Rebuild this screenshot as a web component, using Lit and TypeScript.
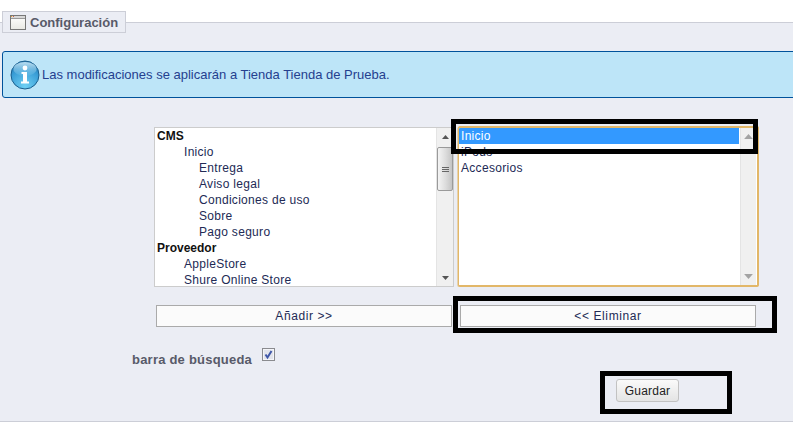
import { LitElement, html, css, svg } from "lit";
import { customElement } from "lit/decorators.js";

const leftItems: [string, string][] = [
  ["CMS", "l0"],
  ["Inicio", "l1"],
  ["Entrega", "l2"],
  ["Aviso legal", "l2"],
  ["Condiciones de uso", "l2"],
  ["Sobre", "l2"],
  ["Pago seguro", "l2"],
  ["Proveedor", "l0"],
  ["AppleStore", "l1"],
  ["Shure Online Store", "l1"],
];

const windowIcon = svg`<svg class="win" width="17" height="15" viewBox="0 0 17 15">
  <defs><linearGradient id="wb" x1="0" y1="0" x2="0" y2="1"><stop offset="0" stop-color="#fff"/><stop offset="1" stop-color="#e9e9e4"/></linearGradient></defs>
  <rect x="0.5" y="0.5" width="15" height="14" fill="url(#wb)" stroke="#777"/>
  <rect x="1" y="1" width="14" height="2" fill="#d8d8d8"/>
  <rect x="1" y="1" width="1" height="1" fill="#e0a030"/>
  <rect x="3" y="1" width="1" height="1" fill="#d06040"/>
  <line x1="1" y1="3.5" x2="15" y2="3.5" stroke="#999"/>
</svg>`;

const infoIcon = svg`<svg class="info" width="30" height="30" viewBox="0 0 30 30">
  <defs>
    <radialGradient id="ib" cx="0.5" cy="0.9" r="0.9"><stop offset="0" stop-color="#6fd0f4"/><stop offset="0.65" stop-color="#3a9ed6"/><stop offset="1" stop-color="#2279b4"/></radialGradient>
    <linearGradient id="ig" x1="0" y1="0" x2="0" y2="1"><stop offset="0" stop-color="#d8f0fb" stop-opacity="0.85"/><stop offset="1" stop-color="#8fd0ee" stop-opacity="0.15"/></linearGradient>
  </defs>
  <circle cx="15" cy="15" r="14" fill="url(#ib)" stroke="#1b5f8e"/>
  <ellipse cx="15" cy="9" rx="11.5" ry="7" fill="url(#ig)"/>
  <circle cx="15" cy="8" r="2.4" fill="#fff"/>
  <path d="M11.5 12h5.5v9.5h2v2h-8v-2h2v-7.5h-1.5z" fill="#fff"/>
</svg>`;

const arrowUp = svg`<svg class="ar" viewBox="0 0 7 4"><path d="M3.5 0L7 4H0z" fill="currentColor"/></svg>`;
const arrowDown = svg`<svg class="ar" viewBox="0 0 7 4"><path d="M0 0h7L3.5 4z" fill="currentColor"/></svg>`;

@customElement("app-root")
export class AppRoot extends LitElement {
  static styles = css`
    :host {
      display: block;
      width: 793px;
      height: 423px;
      overflow: hidden;
      background: #fff;
      font-family: "Liberation Sans", Arial, sans-serif;
      font-size: 12px;
      color: #222a55;
    }
    .page { padding-top: 11px; }
    fieldset {
      margin: 0;
      padding: 0 0 19px;
      border: 1px solid #ccced7;
      border-left-width: 0;
      border-right-width: 0;
      background: #ebedf4;
      min-width: 0;
    }
    legend {
      margin-left: 2px;
      padding: 1px 0 0 7px;
      height: 22px;
      width: 124px;
      box-sizing: border-box;
      border: 1px solid #ccced7;
      background: #ebedf4;
      display: flex;
      align-items: center;
      gap: 3px;
      font-weight: bold;
      font-size: 13px;
      color: #585a69;
    }
    .win { flex: none; }
    .alert {
      margin: 18px 0 0 2px;
      height: 47px;
      box-sizing: border-box;
      width: 800px;
      border: 1px solid #00529b;
      border-radius: 3px;
      background: #bde5f8;
      display: flex;
      align-items: center;
      gap: 2px;
      padding-left: 7px;
      color: #25408f;
      font-size: 13px;
    }
    .info { flex: none; }
    .lists {
      display: flex;
      margin: 29px 0 0 154px;
      gap: 4px;
    }
    .box {
      height: 160px;
      box-sizing: border-box;
      background: #fff;
      display: flex;
      overflow: hidden;
    }
    .box.left { width: 300px; border: 1px solid #ccc; }
    .box.right {
      width: 301px;
      border: 1px solid #e2b768;
      border-right-width: 2px;
      border-bottom-width: 2px;
      border-radius: 2px;
      padding-right: 1px;
      box-shadow: 0 -1px 0 #e2b768, -1px 0 0 rgba(226, 183, 104, 0.5);
    }
    .items { flex: 1; min-width: 0; }
    .row {
      height: 16px;
      line-height: 16px;
      white-space: nowrap;
      letter-spacing: 0.3px;
    }
    .l0 { padding-left: 2px; font-weight: bold; color: #111; letter-spacing: 0; }
    .l1 { padding-left: 29px; }
    .l2 { padding-left: 44px; }
    .right .row { padding-left: 2px; }
    .right .row.sel { background: #3399ff; color: #fff; margin-right: 1px; }
    .bar {
      flex: none;
      width: 16px;
      background: #f0f0f0;
      border-left: 1px solid #e4e4e4;
      box-sizing: border-box;
      display: flex;
      flex-direction: column;
    }
    .arr {
      height: 17px;
      display: flex;
      align-items: center;
      justify-content: center;
      color: #555;
      flex: none;
    }
    .ar { width: 7px; height: 4px; display: block; }
    .bar.off .arr { color: #a3a3a3; }
    .bar.off .ar { width: 9px; height: 5px; }
    .track { flex: 1; }
    .left .bar { width: 17px; }
    .thumb {
      margin-top: 2px;
      height: 44px;
      box-sizing: border-box;
      border: 1px solid #9a9a9a;
      border-radius: 2px;
      background: linear-gradient(90deg, #f4f4f4, #dcdcdc 55%, #c4c4c4);
      display: flex;
      flex-direction: column;
      gap: 1px;
      align-items: center;
      justify-content: center;
    }
    .thumb i { display: block; width: 7px; height: 1px; background: #666; }
    .actions {
      display: flex;
      margin: 18px 0 0 156px;
      gap: 8px;
    }
    .wide {
      width: 296px;
      height: 22px;
      box-sizing: border-box;
      border: 1px solid #aaa;
      background: #fbfbfb;
      text-align: center;
      line-height: 20px;
      letter-spacing: 0.6px;
    }
    .search {
      display: flex;
      align-items: flex-start;
      margin: 21px 0 0 132px;
      gap: 10px;
    }
    .search label {
      font-weight: bold;
      font-size: 13px;
      color: #585a69;
      line-height: 15px;
      padding-top: 4px;
      letter-spacing: 0.22px;
    }
    .check {
      width: 13px;
      height: 13px;
      box-sizing: border-box;
      border: 1px solid #8a8b8f;
      background: #e2e4ec;
      box-shadow: inset 0 0 0 1px #f4f5f9;
      display: block;
      flex: none;
    }
    .save { margin: 12px 0 0 616px; }
    .guardar {
      display: block;
      width: 63px;
      height: 23px;
      box-sizing: border-box;
      border: 1px solid #c2c2c2;
      border-radius: 3px;
      background: linear-gradient(#fafafa, #e4e4e4);
      color: #222;
      font: 12px "Liberation Sans", Arial, sans-serif;
      letter-spacing: 0.2px;
      padding: 0;
    }
    .mark {
      position: absolute;
      box-sizing: border-box;
      border: 5px solid #000;
      pointer-events: none;
    }
    .m1 { left: 451px; top: 119px; width: 307px; height: 35px; }
    .m2 { left: 453px; top: 296px; width: 324px; height: 37px; }
    .m3 { left: 600px; top: 371px; width: 132px; height: 43px; }
  `;

  private scrollbar(off: boolean) {
    return html`<div class="bar ${off ? "off" : ""}">
      <div class="arr">${arrowUp}</div>
      <div class="track">
        ${off ? "" : html`<div class="thumb"><i></i><i></i><i></i></div>`}
      </div>
      <div class="arr">${arrowDown}</div>
    </div>`;
  }

  render() {
    return html`<div class="page">
      <fieldset>
        <legend>${windowIcon}<span>Configuración</span></legend>
        <div class="alert">${infoIcon}<span>Las modificaciones se aplicarán a Tienda Tienda de Prueba.</span></div>
        <div class="lists">
          <div class="box left">
            <div class="items">
              ${leftItems.map(([t, c]) => html`<div class="row ${c}">${t}</div>`)}
            </div>
            ${this.scrollbar(false)}
          </div>
          <div class="box right">
            <div class="items">
              <div class="row sel">Inicio</div>
              <div class="row">iPods</div>
              <div class="row">Accesorios</div>
            </div>
            ${this.scrollbar(true)}
          </div>
        </div>
        <div class="actions">
          <div class="wide">Añadir &gt;&gt;</div>
          <div class="wide">&lt;&lt; Eliminar</div>
        </div>
        <div class="search">
          <label>barra de búsqueda</label>
          <svg class="check" viewBox="0 0 11 11"><path d="M2.5 5.5l2 3 4-6.5" fill="none" stroke="#3f57a8" stroke-width="2"/></svg>
        </div>
        <div class="save"><button class="guardar">Guardar</button></div>
      </fieldset>
      <div class="mark m1"></div>
      <div class="mark m2"></div>
      <div class="mark m3"></div>
    </div>`;
  }
}
